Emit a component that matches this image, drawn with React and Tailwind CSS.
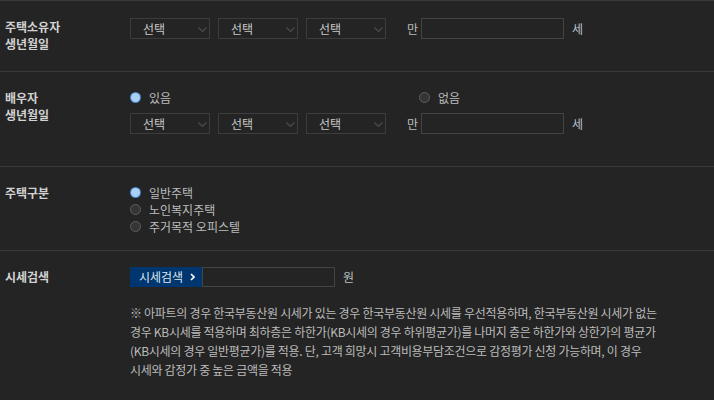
import React from "react";

const Chevron = () => (
  <svg width="9" height="5" viewBox="0 0 9 5" className="absolute right-[2px] top-[8px]">
    <path d="M0.5 0.5 L4.5 4.5 L8.5 0.5" fill="none" stroke="#4a4a4a" strokeWidth="1.2" />
  </svg>
);

const Select = () => (
  <div className="relative w-[80px] h-[21px] border border-[#3c3c3c] flex items-center pl-[12px] text-[12px] text-[#c8c8c8] leading-none">
    선택
    <Chevron />
  </div>
);

const Radio = ({ checked, label }) => (
  <div className="flex items-center h-[17px]">
    {checked ? (
      <span className="w-[11px] h-[11px] rounded-full bg-[#4f86c6] flex items-center justify-center">
        <span className="w-[9px] h-[9px] rounded-full bg-[#a9d0f7]" />
      </span>
    ) : (
      <span className="w-[11px] h-[11px] rounded-full border border-[#5e5e5e] bg-[#353535]" />
    )}
    <span className="ml-[8px] text-[12px] text-[#bcbcbc]">{label}</span>
  </div>
);

const DateRow = () => (
  <div className="flex items-center h-[21px]">
    <div className="flex gap-[8px]">
      <Select />
      <Select />
      <Select />
    </div>
    <span className="ml-[21px] text-[12px] text-[#bcbcbc]">만</span>
    <div className="ml-[3px] w-[143px] h-[21px] border border-[#444]" />
    <span className="ml-[8px] text-[12px] text-[#b8c2cc]">세</span>
  </div>
);

const Label = ({ children }) => (
  <div className="w-[130px] pl-[5px] text-[12px] font-bold leading-[17px] text-[#d2d2d2]">{children}</div>
);

export default function App() {
  return (
    <div
      className="w-[714px] h-[400px] bg-[#242424] border-t border-[#3a3a3a] overflow-hidden"
      style={{ fontFamily: '"Noto Sans CJK KR", "Noto Sans", sans-serif' }}
    >
      <div className="flex h-[71px] border-b border-[#3a3a3a] pt-[17px]">
        <Label>
          주택소유자
          <br />
          생년월일
        </Label>
        <DateRow />
      </div>

      <div className="flex h-[95px] border-b border-[#3a3a3a] pt-[17px]">
        <Label>
          배우자
          <br />
          생년월일
        </Label>
        <div className="flex flex-col">
          <div className="flex leading-[17px]">
            <div className="w-[289px]">
              <Radio checked label="있음" />
            </div>
            <Radio label="없음" />
          </div>
          <div className="mt-[7px]">
            <DateRow />
          </div>
        </div>
      </div>

      <div className="flex h-[84px] border-b border-[#3a3a3a] pt-[17px]">
        <Label>주택구분</Label>
        <div className="flex flex-col leading-[17px]">
          <Radio checked label="일반주택" />
          <Radio label="노인복지주택" />
          <Radio label="주거목적 오피스텔" />
        </div>
      </div>

      <div className="flex pt-[16px]">
        <Label>
          <div className="pt-[1px]">시세검색</div>
        </Label>
        <div className="flex flex-col">
          <div className="flex items-center h-[20px]">
            <div className="w-[72px] h-[20px] bg-[#00366f] flex items-center pl-[9px] text-[12px] text-[#dfe6ee] leading-none">
              시세검색
              <svg width="5" height="8" viewBox="0 0 5 8" className="ml-[7px]">
                <path d="M1 1 L4 4 L1 7" fill="none" stroke="#ffffff" strokeWidth="1.6" />
              </svg>
            </div>
            <div className="w-[133px] h-[20px] border border-[#444]" />
            <span className="ml-[8px] text-[12px] text-[#bcbcbc]">원</span>
          </div>
          <p className="mt-[16px] text-[12px] leading-[19px] text-[#bbbbbb] whitespace-nowrap tracking-[-0.3px]">
            ※ 아파트의 경우 한국부동산원 시세가 있는 경우 한국부동산원 시세를 우선적용하며, 한국부동산원 시세가 없는
            <br />
            경우 KB시세를 적용하며 최하층은 하한가(KB시세의 경우 하위평균가)를 나머지 층은 하한가와 상한가의 평균가
            <br />
            (KB시세의 경우 일반평균가)를 적용. 단, 고객 희망시 고객비용부담조건으로 감정평가 신청 가능하며, 이 경우
            <br />
            시세와 감정가 중 높은 금액을 적용
          </p>
        </div>
      </div>
    </div>
  );
}
